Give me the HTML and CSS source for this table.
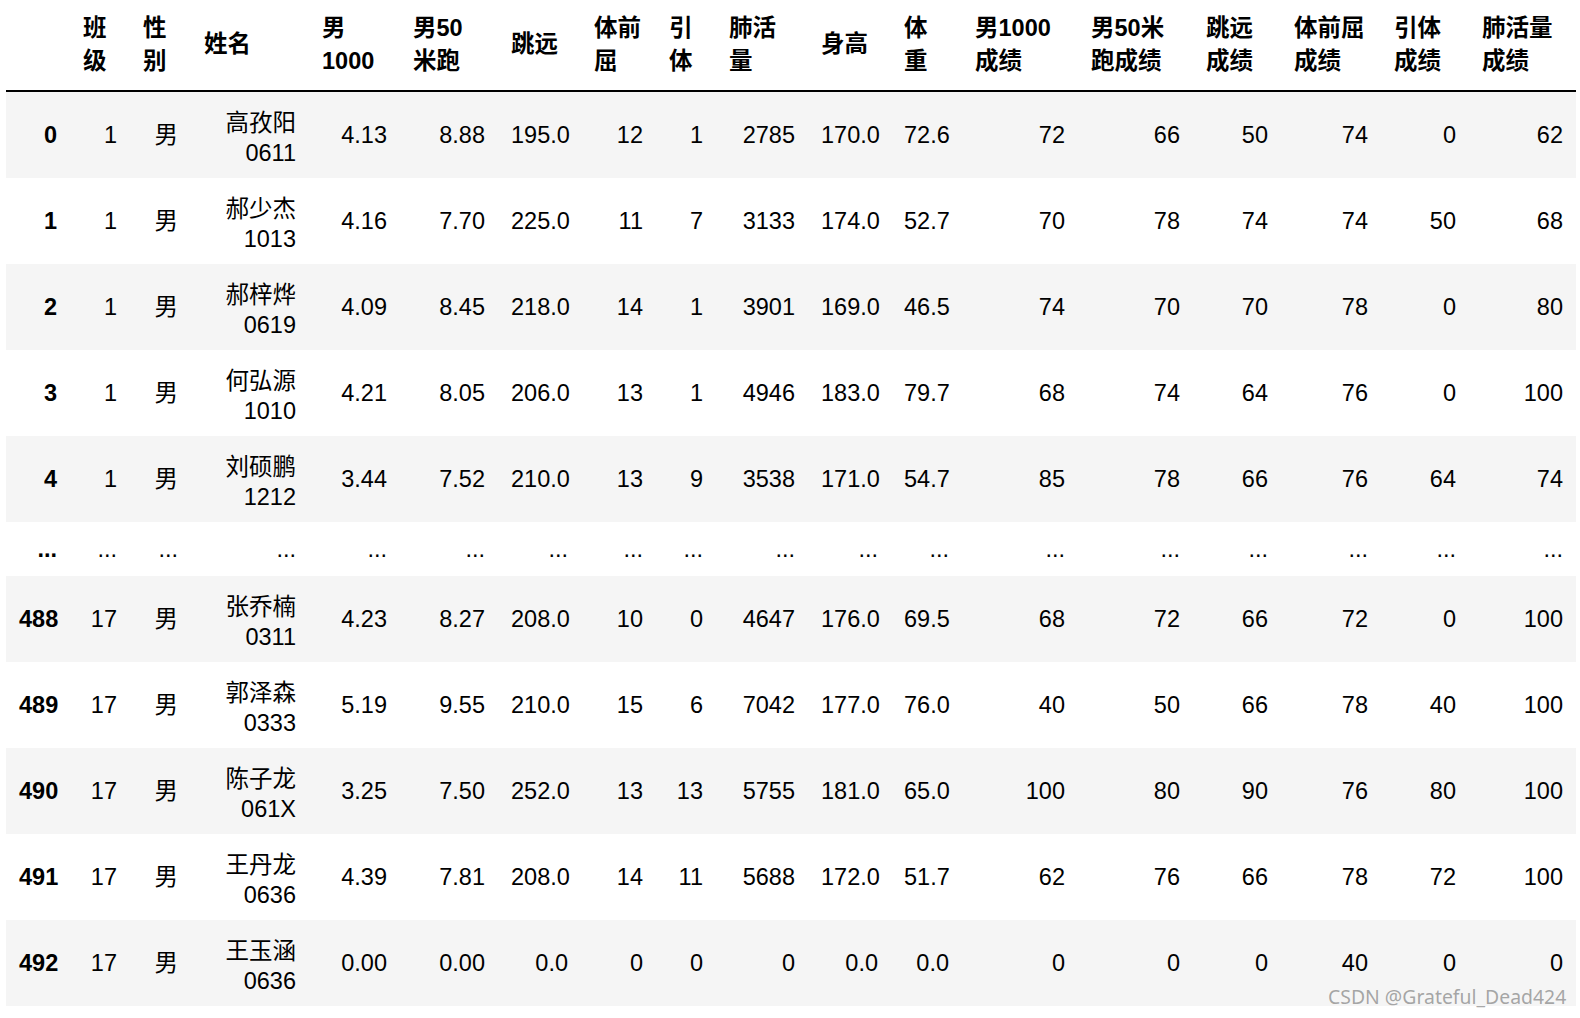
FILE: index.html
```html
<!DOCTYPE html>
<html lang="zh">
<head>
<meta charset="utf-8">
<title>DataFrame</title>
<link rel="stylesheet" href="styles.css">
</head>
<body>
<table class="df">
  <colgroup>
    <col class="c-idx"><col class="c-bj"><col class="c-xb"><col class="c-xm"><col class="c-m1000"><col class="c-m50">
    <col class="c-ty"><col class="c-tqq"><col class="c-yt"><col class="c-fhl"><col class="c-sg"><col class="c-tz">
    <col class="c-s1"><col class="c-s2"><col class="c-s3"><col class="c-s4"><col class="c-s5"><col class="c-s6">
  </colgroup>
  <thead>
    <tr>
      <th></th>
      <th>班<br>级</th>
      <th>性<br>别</th>
      <th>姓名</th>
      <th>男<br>1000</th>
      <th>男50<br>米跑</th>
      <th>跳远</th>
      <th>体前<br>屈</th>
      <th>引<br>体</th>
      <th>肺活<br>量</th>
      <th>身高</th>
      <th>体<br>重</th>
      <th>男1000<br>成绩</th>
      <th>男50米<br>跑成绩</th>
      <th>跳远<br>成绩</th>
      <th>体前屈<br>成绩</th>
      <th>引体<br>成绩</th>
      <th>肺活量<br>成绩</th>
    </tr>
  </thead>
  <tbody>
    <tr class="odd"><th>0</th><td>1</td><td>男</td><td class="name">高孜阳<br>0611</td><td>4.13</td><td>8.88</td><td>195.0</td><td>12</td><td>1</td><td>2785</td><td>170.0</td><td>72.6</td><td>72</td><td>66</td><td>50</td><td>74</td><td>0</td><td>62</td></tr>
    <tr><th>1</th><td>1</td><td>男</td><td class="name">郝少杰<br>1013</td><td>4.16</td><td>7.70</td><td>225.0</td><td>11</td><td>7</td><td>3133</td><td>174.0</td><td>52.7</td><td>70</td><td>78</td><td>74</td><td>74</td><td>50</td><td>68</td></tr>
    <tr class="odd"><th>2</th><td>1</td><td>男</td><td class="name">郝梓烨<br>0619</td><td>4.09</td><td>8.45</td><td>218.0</td><td>14</td><td>1</td><td>3901</td><td>169.0</td><td>46.5</td><td>74</td><td>70</td><td>70</td><td>78</td><td>0</td><td>80</td></tr>
    <tr><th>3</th><td>1</td><td>男</td><td class="name">何弘源<br>1010</td><td>4.21</td><td>8.05</td><td>206.0</td><td>13</td><td>1</td><td>4946</td><td>183.0</td><td>79.7</td><td>68</td><td>74</td><td>64</td><td>76</td><td>0</td><td>100</td></tr>
    <tr class="odd"><th>4</th><td>1</td><td>男</td><td class="name">刘硕鹏<br>1212</td><td>3.44</td><td>7.52</td><td>210.0</td><td>13</td><td>9</td><td>3538</td><td>171.0</td><td>54.7</td><td>85</td><td>78</td><td>66</td><td>76</td><td>64</td><td>74</td></tr>
    <tr class="gap"><th>...</th><td>...</td><td>...</td><td>...</td><td>...</td><td>...</td><td>...</td><td>...</td><td>...</td><td>...</td><td>...</td><td>...</td><td>...</td><td>...</td><td>...</td><td>...</td><td>...</td><td>...</td></tr>
    <tr class="odd"><th>488</th><td>17</td><td>男</td><td class="name">张乔楠<br>0311</td><td>4.23</td><td>8.27</td><td>208.0</td><td>10</td><td>0</td><td>4647</td><td>176.0</td><td>69.5</td><td>68</td><td>72</td><td>66</td><td>72</td><td>0</td><td>100</td></tr>
    <tr><th>489</th><td>17</td><td>男</td><td class="name">郭泽森<br>0333</td><td>5.19</td><td>9.55</td><td>210.0</td><td>15</td><td>6</td><td>7042</td><td>177.0</td><td>76.0</td><td>40</td><td>50</td><td>66</td><td>78</td><td>40</td><td>100</td></tr>
    <tr class="odd"><th>490</th><td>17</td><td>男</td><td class="name">陈子龙<br>061X</td><td>3.25</td><td>7.50</td><td>252.0</td><td>13</td><td>13</td><td>5755</td><td>181.0</td><td>65.0</td><td>100</td><td>80</td><td>90</td><td>76</td><td>80</td><td>100</td></tr>
    <tr><th>491</th><td>17</td><td>男</td><td class="name">王丹龙<br>0636</td><td>4.39</td><td>7.81</td><td>208.0</td><td>14</td><td>11</td><td>5688</td><td>172.0</td><td>51.7</td><td>62</td><td>76</td><td>66</td><td>78</td><td>72</td><td>100</td></tr>
    <tr class="odd"><th>492</th><td>17</td><td>男</td><td class="name">王玉涵<br>0636</td><td>0.00</td><td>0.00</td><td>0.0</td><td>0</td><td>0</td><td>0</td><td>0.0</td><td>0.0</td><td>0</td><td>0</td><td>0</td><td>40</td><td>0</td><td>0</td></tr>
  </tbody>
</table>
<div class="watermark">CSDN @Grateful_Dead424</div>
</body>
</html>
```

FILE: styles.css
```css
html, body {
  margin: 0;
  padding: 0;
  background: #ffffff;
}

body {
  position: relative;
  width: 1580px;
  height: 1018px;
  overflow: hidden;
  font-family: "Liberation Sans", "Noto Sans CJK SC", sans-serif;
  color: #000;
}

.df {
  margin-left: 6px;
  width: 1570px;
  table-layout: fixed;
  border-collapse: separate;
  border-spacing: 0;
  font-size: 23.5px;
}

.c-idx { width: 64px; }
.c-bj { width: 60px; }
.c-xb { width: 61px; }
.c-xm { width: 118px; }
.c-m1000 { width: 91px; }
.c-m50 { width: 98px; }
.c-ty { width: 83px; }
.c-tqq { width: 75px; }
.c-yt { width: 60px; }
.c-fhl { width: 92px; }
.c-sg { width: 83px; }
.c-tz { width: 71px; }
.c-s1 { width: 116px; }
.c-s2 { width: 115px; }
.c-s3 { width: 88px; }
.c-s4 { width: 100px; }
.c-s5 { width: 88px; }
.c-s6 { width: 107px; }

.df thead th {
  font-weight: bold;
  text-align: left;
  vertical-align: middle;
  line-height: 33.5px;
  padding: 11.5px 13px;
  border-bottom: 2px solid #000;
  white-space: nowrap;
}

.df tbody th,
.df tbody td {
  text-align: right;
  vertical-align: middle;
  line-height: 30px;
  padding: 13px 13px;
  white-space: nowrap;
}

.df tbody td.name {
  padding-top: 15.5px;
  padding-bottom: 10.5px;
}

.df tbody th {
  font-weight: bold;
}

.df tbody tr.odd {
  background: #f5f5f5;
}

.df tbody tr.gap th,
.df tbody tr.gap td {
  padding-top: 12px;
  padding-bottom: 12px;
}

.watermark {
  position: absolute;
  left: 1328px;
  top: 985px;
  font-family: "Noto Sans", "Open Sans", sans-serif;
  font-size: 19.4px;
  line-height: 24px;
  color: rgba(130, 130, 130, 0.7);
  white-space: nowrap;
}
```
